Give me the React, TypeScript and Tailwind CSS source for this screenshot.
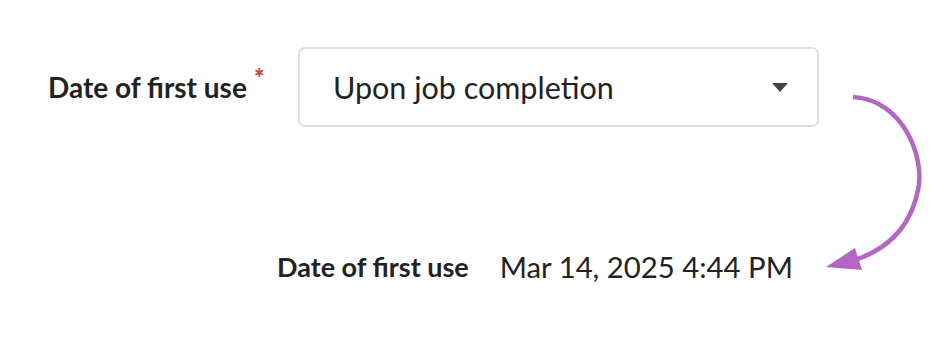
export default function App() {
  return (
    <div
      className="relative w-[950px] h-[340px] bg-white text-[#222222] overflow-hidden"
      style={{ fontFamily: "Lato, 'Noto Sans', sans-serif" }}
    >
      <div className="pt-[47px] pl-[48px] flex items-center">
        <div className="w-[250px] flex items-start">
          <span className="text-[28px] font-bold leading-[36px]">Date of first use</span>
          <span className="ml-[7px] -mt-[6px] text-[26px] font-bold text-[#d9363e] leading-[30px]">*</span>
        </div>
        <div className="w-[521px] h-[80px] border-2 border-[#e0e0e0] rounded-[7px] flex items-center justify-between pl-[33px] pr-[29px]">
          <span className="text-[30.5px] leading-[36px]">Upon job completion</span>
          <svg width="16" height="9" viewBox="0 0 16 9">
            <path d="M0 0 H16 L8 9 Z" fill="#454545" />
          </svg>
        </div>
      </div>
      <div className="mt-[122px] pl-[277px] flex items-center gap-[31px]">
        <span className="text-[27px] font-bold leading-[36px]">Date of first use</span>
        <span className="text-[29.3px] leading-[36px]">Mar 14, 2025 4:44 PM</span>
      </div>
      <svg className="absolute left-0 top-0" width="950" height="340" viewBox="0 0 950 340">
        <path
          d="M853 97 C 905 100, 925 160, 918 190 C 910 230, 885 250, 855 260"
          fill="none"
          stroke="#b565c4"
          strokeWidth="4.5"
        />
        <path d="M826 267 L855 248 L862 270 Z" fill="#b565c4" />
      </svg>
    </div>
  );
}
